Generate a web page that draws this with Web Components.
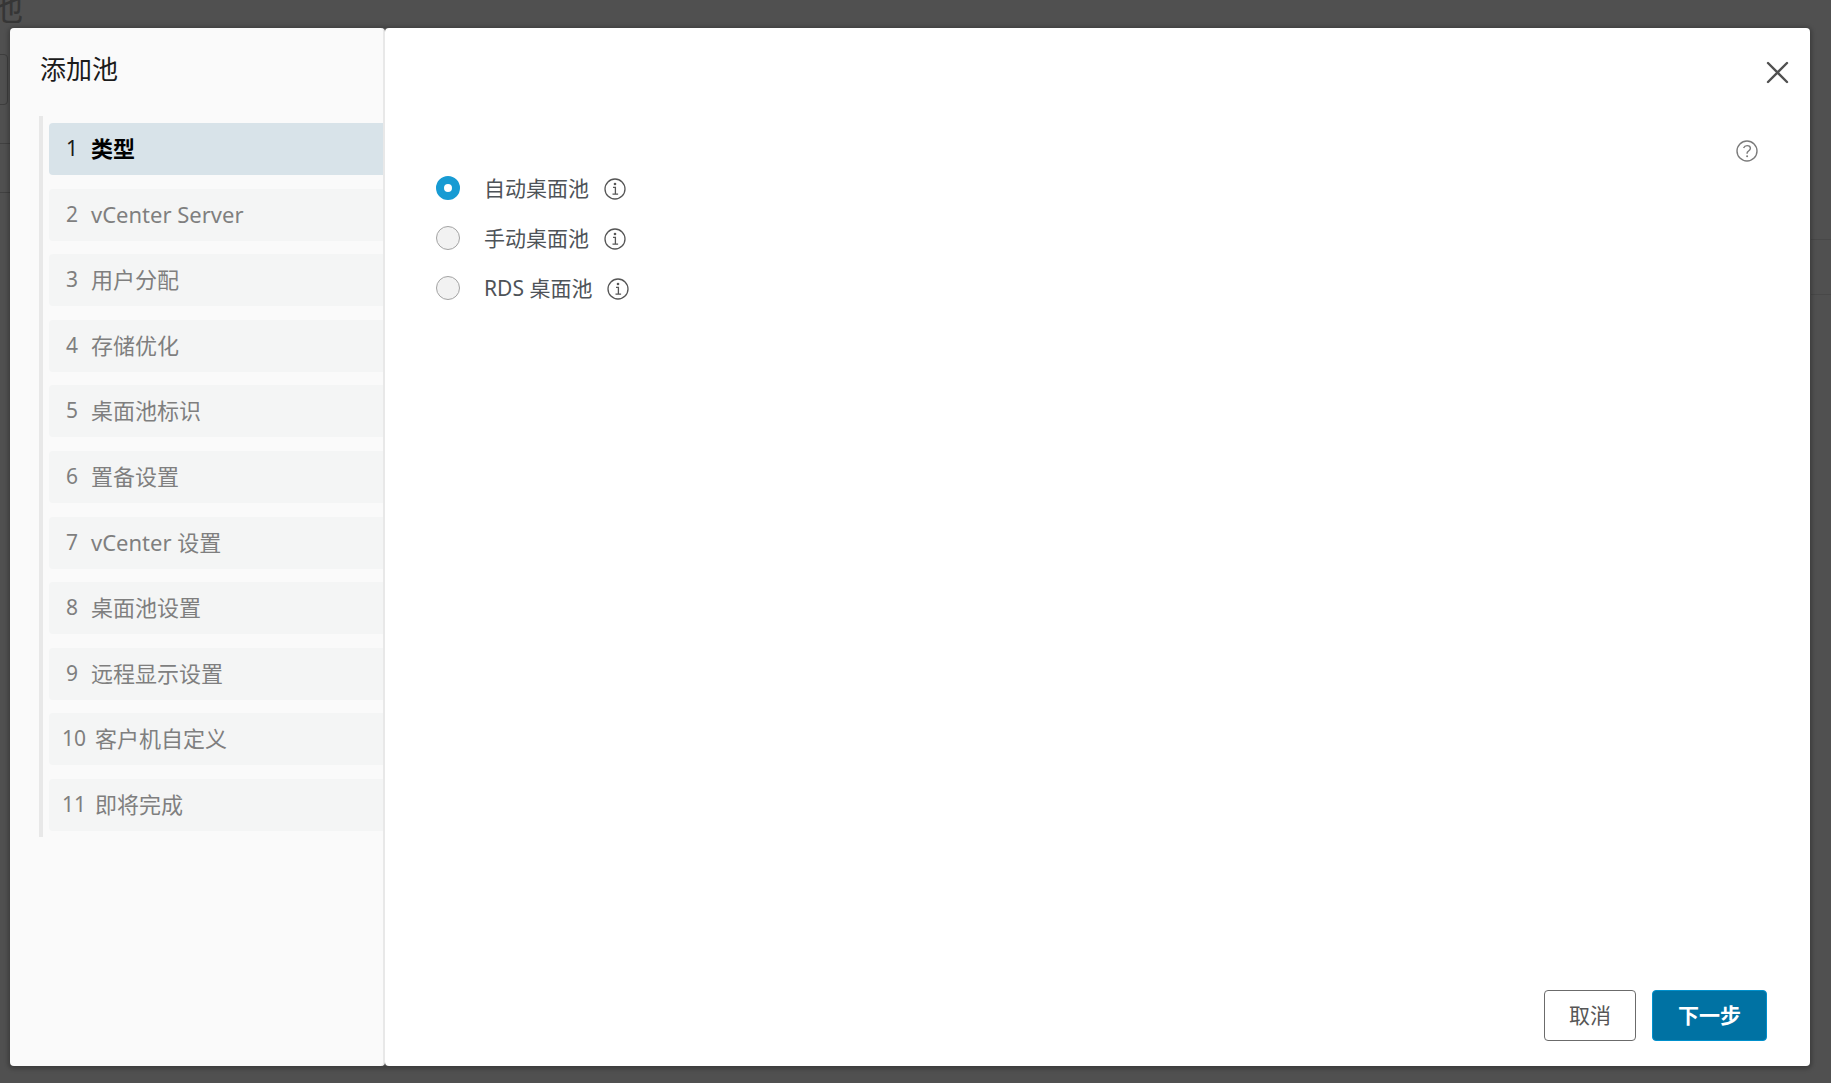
<!DOCTYPE html>
<html lang="zh-CN">
<head>
<meta charset="utf-8">
<title>添加池</title>
<style>
body {
  margin: 0;
  font-family: "Noto Sans", "Noto Sans CJK SC", sans-serif;
  font-size: 21px;
  line-height: 28px;
  color: #4e5358;
}
</style>
</head>
<body>
<pool-page>
  <wizard-dialog heading="添加池">
    <wizard-steps slot="steps">
      <wizard-step number="1" current>类型</wizard-step>
      <wizard-step number="2">vCenter Server</wizard-step>
      <wizard-step number="3">用户分配</wizard-step>
      <wizard-step number="4">存储优化</wizard-step>
      <wizard-step number="5">桌面池标识</wizard-step>
      <wizard-step number="6">置备设置</wizard-step>
      <wizard-step number="7">vCenter 设置</wizard-step>
      <wizard-step number="8">桌面池设置</wizard-step>
      <wizard-step number="9">远程显示设置</wizard-step>
      <wizard-step number="10">客户机自定义</wizard-step>
      <wizard-step number="11">即将完成</wizard-step>
    </wizard-steps>
    <pool-type-options></pool-type-options>
    <wizard-button slot="actions">取消</wizard-button>
    <wizard-button slot="actions" primary>下一步</wizard-button>
  </wizard-dialog>
</pool-page>

<script>
function attach(el, html) {
  const template = document.createElement("template");
  template.innerHTML = html;
  el.attachShadow({ mode: "open" }).appendChild(template.content.cloneNode(true));
}

class PoolPage extends HTMLElement {
  constructor() {
    super();
    attach(this, `
<style>
:host {
  display: flex;
  box-sizing: border-box;
  min-height: 100vh;
  padding: 28px 21px 17px 10px;
  background: #505050;
  position: relative;
}
::slotted(*) {
  flex: 1;
}
/* dimmed page behind the dialog */
.behind {
  position: absolute;
  inset: 0;
  overflow: hidden;
}
.behind span {
  position: absolute;
  left: -11px;
  top: -13px;
  font-size: 34px;
  line-height: 40px;
  color: #363636;
}
.box {
  position: absolute;
  left: -60px;
  top: 54px;
  width: 66px;
  height: 49px;
  border: 1px solid #3e3e3e;
  border-radius: 4px;
}
.line {
  position: absolute;
  left: 0;
  width: 10px;
  border-top: 1px solid #414141;
}
.line.right {
  left: auto;
  right: 0;
  width: 20px;
  border-color: #484848;
}
</style>
<div class="behind">
  <span>池</span>
  <div class="box"></div>
  <div class="line" style="top:143px"></div>
  <div class="line" style="top:192px"></div>
  <div class="line right" style="top:239px"></div>
  <div class="line right" style="top:294px"></div>
</div>
<slot></slot>
`);
  }
}

class WizardDialog extends HTMLElement {
  constructor() {
    super();
    attach(this, `
<style>
:host {
  display: flex;
  position: relative;
  box-shadow: 0 1px 4px 2px rgba(0, 0, 0, .25);
  border-radius: 4px;
}
aside {
  box-sizing: border-box;
  flex: 0 0 375px;
  padding: 23px 0 24px 29px;
  background: #fafafa;
  border-right: 2px solid #e8e8e8;
  border-radius: 4px;
}
h1 {
  margin: 0 0 29px;
  padding-left: 1px;
  font-size: 26px;
  line-height: 36px;
  font-weight: 400;
  color: #1b1b1b;
}
main {
  flex: 1;
  display: flex;
  flex-direction: column;
  background: #fff;
  border-radius: 4px;
}
header {
  display: flex;
  flex-direction: column;
  align-items: flex-end;
  gap: 54px;
  padding: 32px 20px 0 0;
}
.icon {
  display: flex;
  padding: 0;
  border: 0;
  background: none;
  cursor: pointer;
}
.help {
  margin-right: 31px;
}
.content {
  flex: 1;
  padding-left: 51px;
}
footer {
  display: flex;
  justify-content: flex-end;
  gap: 16px;
  padding: 0 43px 25px;
}
</style>
<aside>
  <h1></h1>
  <slot name="steps"></slot>
</aside>
<main>
  <header>
    <button class="icon close" type="button" aria-label="关闭">
      <svg width="25" height="25" viewBox="0 0 25 25" fill="none" stroke="#505050" stroke-width="2.4" stroke-linecap="round"><path d="M3 3l19 19M22 3L3 22"/></svg>
    </button>
    <button class="icon help" type="button" aria-label="帮助">
      <svg width="24" height="24" viewBox="0 0 24 24" fill="none" stroke="#7b7b7b" stroke-width="1.4"><circle cx="12" cy="12" r="10"/><path d="M8.6 8.9C9.2 7.4 10.5 6.6 12.1 6.6c2 0 3.3 1.1 3.3 2.7 0 1.5-1 2.1-2 2.8-.9.6-1.3 1-1.3 2v.6"/><circle cx="12.1" cy="17.2" r="1" fill="#7b7b7b" stroke="none"/></svg>
    </button>
  </header>
  <div class="content"><slot></slot></div>
  <footer><slot name="actions"></slot></footer>
</main>
`);
    this.setAttribute("role", "dialog");
    this.shadowRoot.querySelector("h1").textContent = this.getAttribute("heading");
    this.shadowRoot.querySelector(".close").addEventListener("click", () => {
      this.dispatchEvent(new CustomEvent("wizard-close", { bubbles: true }));
    });
  }
}

class WizardSteps extends HTMLElement {
  constructor() {
    super();
    attach(this, `
<style>
:host {
  display: block;
}
nav {
  display: flex;
  flex-direction: column;
  justify-content: space-between;
  min-height: 708px;
  padding: 7px 0 6px 6px;
  border-left: 4px solid #e8e8e8;
}
</style>
<nav><slot></slot></nav>
`);
  }
}

class WizardStep extends HTMLElement {
  constructor() {
    super();
    attach(this, `
<style>
:host {
  display: block;
}
button {
  display: flex;
  align-items: center;
  gap: 9px;
  width: 100%;
  padding: 11px 13px 13px;
  border: 0;
  border-radius: 4px 0 0 4px;
  background: #f4f5f5;
  font: inherit;
  color: #7f7f7f;
  text-align: left;
}
.number {
  min-width: 20px;
  text-align: center;
}
.label {
  font-size: 22px;
}
:host([current]) button {
  background: #d8e3e9;
  color: #1b1b1b;
}
:host([current]) .label {
  font-weight: 700;
  color: #000;
}
</style>
<button type="button"><span class="number"></span><span class="label"><slot></slot></span></button>
`);
    this.shadowRoot.querySelector(".number").textContent = this.getAttribute("number");
    if (this.hasAttribute("current")) {
      this.shadowRoot.querySelector("button").setAttribute("aria-current", "step");
    }
  }
}

class PoolTypeOptions extends HTMLElement {
  constructor() {
    super();
    const options = [
      ["automated", "自动桌面池"],
      ["manual", "手动桌面池"],
      ["rds", "RDS 桌面池"],
    ];
    attach(this, `
<style>
:host {
  display: block;
}
fieldset {
  display: flex;
  flex-direction: column;
  gap: 22px;
  margin: 0;
  padding: 11px 0 0;
  border: 0;
}
.option {
  display: flex;
  align-items: center;
}
input {
  appearance: none;
  box-sizing: border-box;
  width: 24px;
  height: 24px;
  margin: 0 24px 0 0;
  border: 1px solid #a3a3a3;
  border-radius: 50%;
  background: #f2f2f2;
}
input:checked {
  border: 8px solid #179bd3;
  background: #fff;
}
.info {
  display: flex;
  margin-left: 14px;
  padding: 2px 0 0;
  border: 0;
  background: none;
  cursor: pointer;
}
</style>
<fieldset aria-label="类型">
${options.map(([id, label], i) => `
  <div class="option">
    <input type="radio" name="type" id="${id}"${i === 0 ? " checked" : ""}>
    <label for="${id}">${label}</label>
    <button class="info" type="button" aria-label="信息">
      <svg width="24" height="24" viewBox="0 0 24 24" fill="none" stroke="#565656" stroke-width="1.3"><circle cx="12" cy="12" r="10"/><path d="M10 10.3h2.4v6.7M9.5 17.2h5.6"/><circle cx="12" cy="7" r="1.3" fill="#565656" stroke="none"/></svg>
    </button>
  </div>`).join("")}
</fieldset>
`);
  }
}

class WizardButton extends HTMLElement {
  constructor() {
    super();
    attach(this, `
<style>
:host {
  display: block;
}
button {
  padding: 10px 24px 11px;
  border: 1px solid #6b6b6b;
  border-radius: 4px;
  background: #fff;
  font: inherit;
  color: #565656;
  cursor: pointer;
}
:host([primary]) button {
  padding: 10px 25px 11px;
  border-color: #0090cc;
  background: #0072a3;
  color: #fff;
  font-weight: 700;
}
</style>
<button type="button"><slot></slot></button>
`);
  }
}

window.customElements.define("pool-page", PoolPage);
window.customElements.define("wizard-dialog", WizardDialog);
window.customElements.define("wizard-steps", WizardSteps);
window.customElements.define("wizard-step", WizardStep);
window.customElements.define("pool-type-options", PoolTypeOptions);
window.customElements.define("wizard-button", WizardButton);
</script>
</body>
</html>
